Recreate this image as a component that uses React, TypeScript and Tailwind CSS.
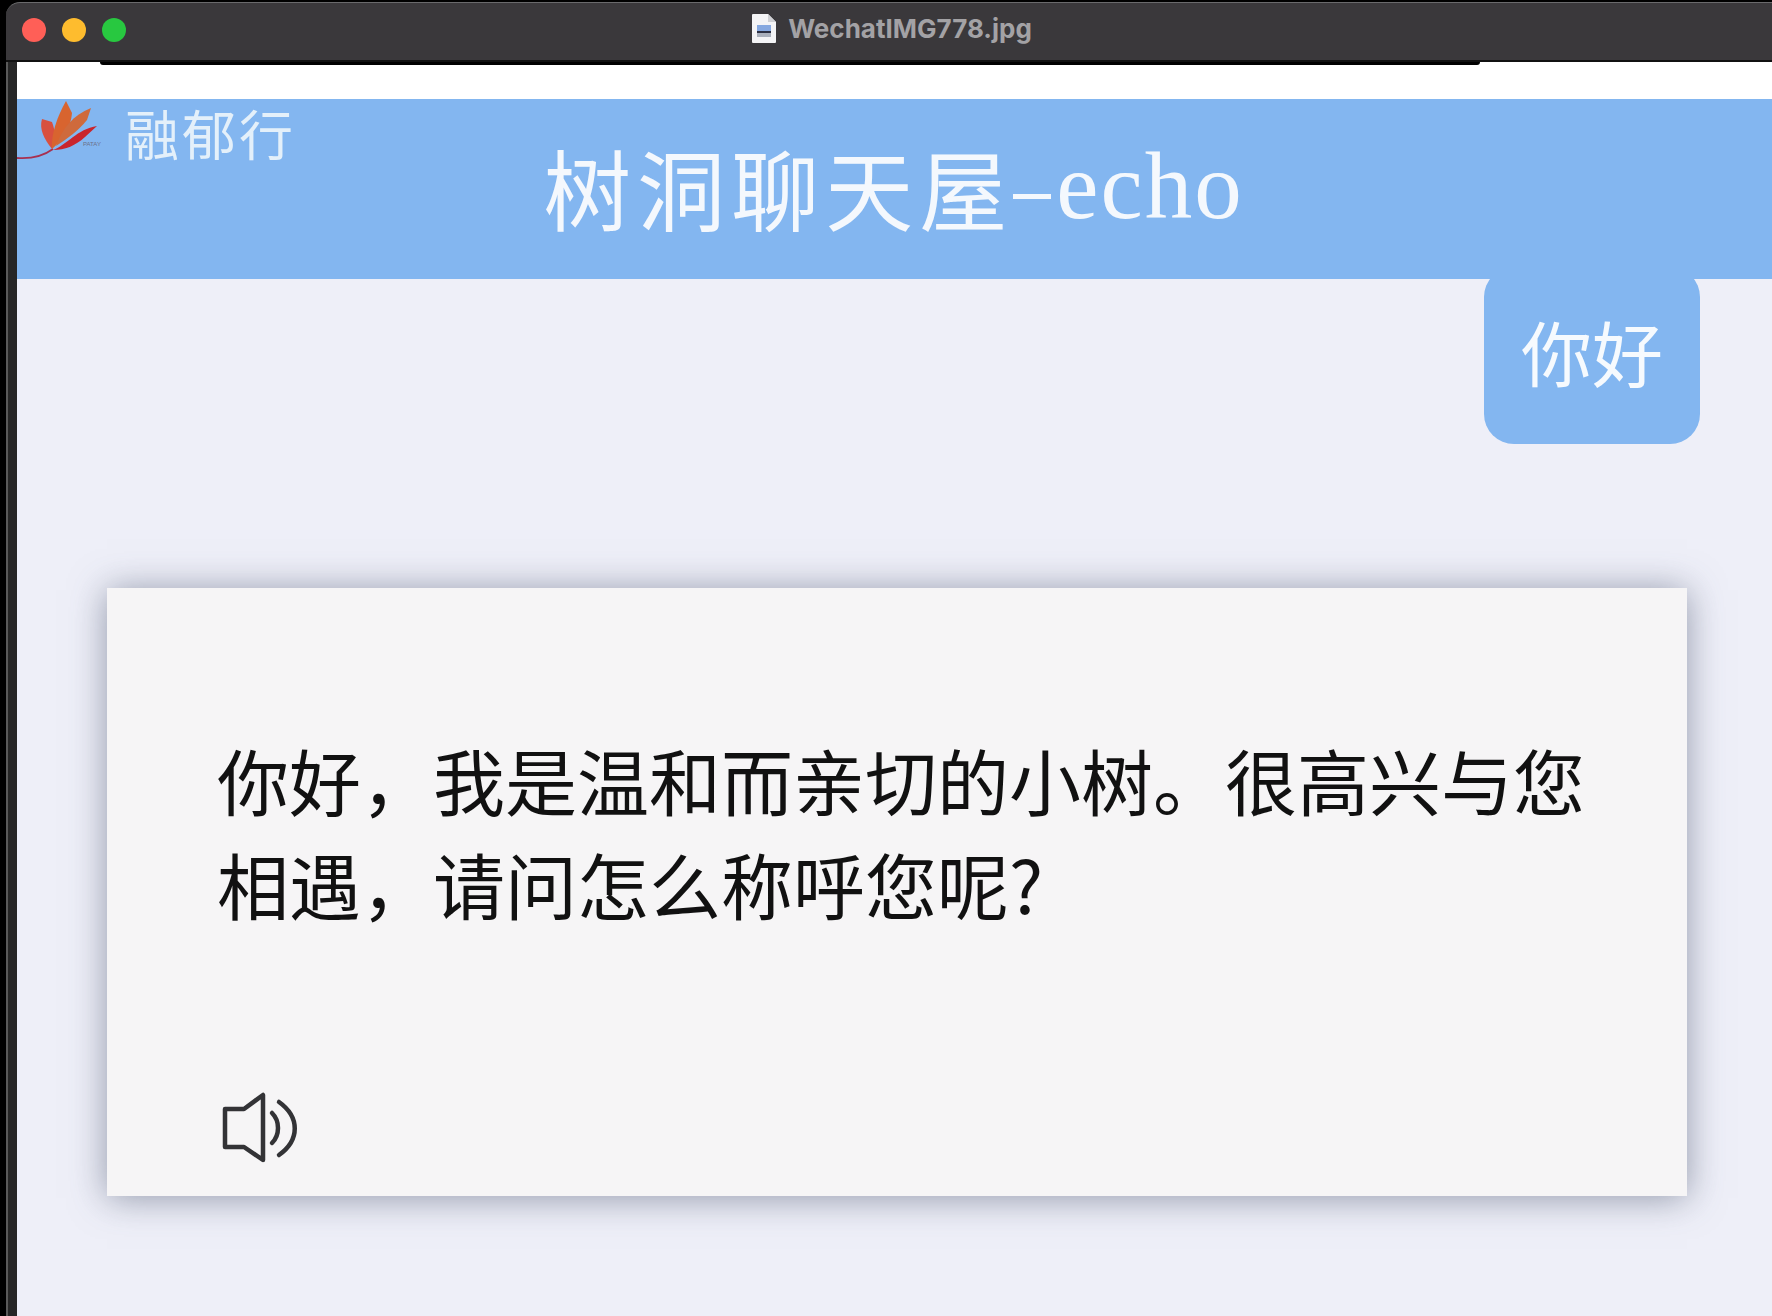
export default function App() {
  const cjk = "font-['Noto_Sans_CJK_SC',sans-serif]";
  return (
    <div className="relative w-[1772px] h-[1316px] overflow-hidden bg-black flex flex-col">
      {/* window title bar */}
      <div className="relative h-[60px] shrink-0 ml-[6px] mt-[2px] rounded-tl-[14px] bg-[#3a383b] border-t border-[#6a6a6c] border-b-2 border-b-[#111111] flex items-center justify-center">
        <div className="absolute left-[16px] top-[15px] flex gap-[16px]">
          <span className="w-[24px] h-[24px] rounded-full bg-[#ff5f57]" />
          <span className="w-[24px] h-[24px] rounded-full bg-[#febc2e]" />
          <span className="w-[24px] h-[24px] rounded-full bg-[#28c840]" />
        </div>
        <div className="flex items-center gap-[12px] -mt-[6px] ml-[6px]">
          <svg width="24" height="29" viewBox="0 0 24 29">
            <path d="M1 0h15l8 8v20a1 1 0 0 1-1 1H1a1 1 0 0 1-1-1V1a1 1 0 0 1 1-1z" fill="#f4f4f6" />
            <path d="M16 0l8 8h-8z" fill="#cfd0d4" />
            <rect x="5" y="11" width="14" height="6" fill="#86a8e0" />
            <rect x="5" y="17" width="14" height="2" fill="#2c3044" />
            <rect x="5" y="19" width="14" height="4" fill="#aab0bc" />
          </svg>
          <span className="font-['Inter',sans-serif] font-bold text-[26px] leading-[30px] text-[#a3a2a5]">WechatIMG778.jpg</span>
        </div>
      </div>

      <div className="flex-1 flex min-h-0">
        {/* window edge */}
        <div className="w-[6px] shrink-0 bg-black" />
        <div className="w-[2px] shrink-0 bg-[#5a5a5a]" />
        <div className="w-[9px] shrink-0 bg-[#262626]" />

        <div className="relative flex-1 flex flex-col bg-[#eeeff8] min-w-0">
          {/* dark sliver of the photographed notch */}
          <div className="absolute left-[83px] top-0 w-[1380px] h-[3px] bg-black rounded-b-[14px]" />
          <div className="h-[37px] shrink-0 bg-white" />

          {/* header */}
          <div className="relative z-10 h-[180px] shrink-0 bg-[#83b6f0] flex items-center justify-center">
            <div className="absolute left-0 top-0 flex items-start">
              <svg width="108" height="64" viewBox="0 0 108 64">
                <path d="M0 59c14 1 25-1 36-9" fill="none" stroke="#a83050" strokeWidth="1.8" />
                <path d="M35 50C27 40 22 30 25 20L35 23C39 34 39 42 35 50z" fill="#d8503f" />
                <path d="M35 50C34 35 40 18 49 2L55 14C54 28 46 40 35 50z" fill="#d8642f" />
                <path d="M39 47C45 30 56 16 74 9L70 21C61 32 50 40 39 47z" fill="#cf6a3c" />
                <path d="M36 51C50 46 60 30 80 27L68 38C58 47 48 51 36 51z" fill="#c9252d" />
                <text x="66" y="47" fontSize="6" fill="#6b6f8a" fontFamily="Liberation Sans">PATAY</text>
              </svg>
              <span className={`${cjk} text-[54px] leading-[62px] tracking-[3px] text-[#e4f0fa] mt-[3px]`}>融郁行</span>
            </div>
            <div className="flex items-center text-[#f4f8fd] mt-[-6px] ml-[-2px]">
              <span className={`${cjk} font-normal text-[88px] leading-[100px] tracking-[6px]`}>树洞聊天屋</span>
              <span className="font-['Liberation_Serif',serif] text-[95px] leading-[100px] tracking-[2px]">
                <span className="inline-block w-[38px] h-[5px] bg-[#f4f8fd] align-middle mr-[5px]" />echo
              </span>
            </div>
          </div>

          {/* conversation */}
          <div className="flex-1 min-h-0 flex flex-col">
            <div className="flex justify-end pr-[72px]">
              <div className={`${cjk} -mt-[12px] w-[216px] h-[177px] pb-[10px] rounded-[30px] bg-[#83b6f0] flex items-center justify-center text-[71px] leading-none text-[#f6fafe]`}>
                你好
              </div>
            </div>
            <div className="mt-[144px] ml-[90px] w-[1580px] h-[608px] bg-[#f6f5f6] shadow-[0_2px_34px_rgba(70,80,105,0.55)] pl-[110px] pt-[139px] flex flex-col">
              <p className={`${cjk} w-[1390px] text-[72px] leading-[104px] text-[#111111]`}>
                你好，我是温和而亲切的小树。很高兴与您相遇，请问怎么称呼您呢?
              </p>
              <svg width="80" height="76" viewBox="0 0 80 76" className="mt-[155px] ml-[4px]" fill="none" stroke="#333336" strokeWidth="4.5" strokeLinecap="round" strokeLinejoin="round">
                <path d="M4 19H23L42 5V70L23 57H4z" />
                <path d="M51 23c8 8 8 22 0 30" />
                <path d="M58 12c21 15 21 38 0 53" />
              </svg>
            </div>
          </div>
        </div>
      </div>
    </div>
  );
}
